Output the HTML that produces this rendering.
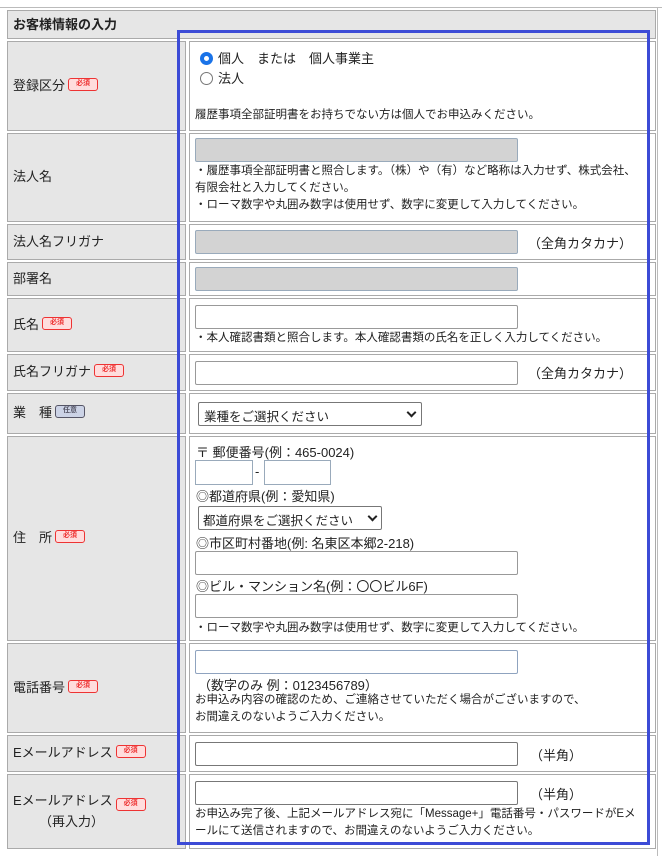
<!DOCTYPE html><html><head><meta charset="utf-8"><style>
*{box-sizing:border-box;margin:0;padding:0}
body{width:662px;height:856px;background:#fff;position:relative;overflow:hidden;font-family:"Liberation Sans","Noto Sans CJK JP",sans-serif;font-size:13px;color:#222}
.a{position:absolute}
.l{position:absolute;left:7px;width:179px;background:#e6e6e6;border:1px solid #aaa;padding-left:5px;padding-bottom:4px;display:flex;align-items:center;font-size:13px}
.v{position:absolute;left:189px;width:467px;background:#fff;border:1px solid #aaa}
.b{display:inline-block;width:30px;height:13px;border:1.5px solid #e33;border-radius:3px;background:#fdd;color:#e33;font-size:7px;line-height:10px;text-align:center;margin-left:3px;font-weight:bold}
.bn{border-color:#556;background:#ccd3e6;color:#556}
.i{position:absolute;left:195px;width:323px;height:24px;border:1px solid #777;border-radius:2px;background:#fff}
.g{background:#d3d3d3;border-color:#9ab}
.s{font-size:11.5px;line-height:17px}
.t{font-size:13px}
.ch{position:absolute;right:6px;top:6px;width:7px;height:7px;border-right:2px solid #222;border-bottom:2px solid #222;transform:rotate(45deg)}
</style></head><body>
<div class="a" style="left:0;top:7px;width:662px;height:1px;background:#bbb"></div>
<div class="a" style="left:657px;top:7px;width:1px;height:849px;background:#bbb"></div>
<div class="l" style="top:10px;height:29px;width:649px;font-weight:bold;padding-bottom:2px">お客様情報の入力</div>

<div class="l" style="top:41px;height:90px">登録区分<span class="b">必須</span></div>
<div class="v" style="top:41px;height:90px"></div>
<div class="a t" style="left:200px;top:48px"><span style="display:inline-block;width:13px;height:13px;border-radius:50%;border:4px solid #1a73e8;vertical-align:-2px;margin-right:5px"></span>個人　または　個人事業主</div>
<div class="a t" style="left:200px;top:68px"><span style="display:inline-block;width:13px;height:13px;border-radius:50%;border:1px solid #777;vertical-align:-2px;margin-right:5px"></span>法人</div>
<div class="a s" style="left:195px;top:107px">履歴事項全部証明書をお持ちでない方は個人でお申込みください。</div>

<div class="l" style="top:133px;height:89px">法人名</div>
<div class="v" style="top:133px;height:89px"></div>
<div class="i g" style="top:138px"></div>
<div class="a s" style="left:195px;top:163px;width:448px">・履歴事項全部証明書と照合します。（株）や（有）など略称は入力せず、株式会社、有限会社と入力してください。<br>・ローマ数字や丸囲み数字は使用せず、数字に変更して入力してください。</div>

<div class="l" style="top:224px;height:36px">法人名フリガナ</div>
<div class="v" style="top:224px;height:36px"></div>
<div class="i g" style="top:230px"></div>
<div class="a t" style="left:528px;top:233px">（全角カタカナ）</div>

<div class="l" style="top:262px;height:34px">部署名</div>
<div class="v" style="top:262px;height:34px"></div>
<div class="i g" style="top:267px"></div>

<div class="l" style="top:298px;height:54px">氏名<span class="b">必須</span></div>
<div class="v" style="top:298px;height:54px"></div>
<div class="i" style="top:305px;border-color:#999"></div>
<div class="a s" style="left:195px;top:330px">・本人確認書類と照合します。本人確認書類の氏名を正しく入力してください。</div>

<div class="l" style="top:354px;height:37px">氏名フリガナ<span class="b">必須</span></div>
<div class="v" style="top:354px;height:37px"></div>
<div class="i" style="top:361px;border-color:#999"></div>
<div class="a t" style="left:528px;top:363px">（全角カタカナ）</div>

<div class="l" style="top:393px;height:41px">業　種<span class="b bn">任意</span></div>
<div class="v" style="top:393px;height:41px"></div>
<div class="a" style="left:198px;top:402px;width:224px;height:24px;border:1px solid #777;border-radius:2px;font-size:12.5px;padding:3px 5px">業種をご選択ください<span class="ch"></span></div>

<div class="l" style="top:436px;height:205px">住　所<span class="b">必須</span></div>
<div class="v" style="top:436px;height:205px"></div>
<div class="a t" style="left:196px;top:442px">〒 郵便番号(例：465-0024)</div>
<div class="a" style="left:195px;top:460px;width:58px;height:25px;border:1px solid #9ab"></div>
<div class="a t" style="left:255px;top:464px">-</div>
<div class="a" style="left:264px;top:460px;width:67px;height:25px;border:1px solid #9ab"></div>
<div class="a t" style="left:196px;top:486px">◎都道府県(例：愛知県)</div>
<div class="a" style="left:198px;top:506px;width:184px;height:24px;border:1px solid #777;border-radius:2px;font-size:12.5px;padding:3px 4px">都道府県をご選択ください<span class="ch" style="right:5px"></span></div>
<div class="a t" style="left:196px;top:533px">◎市区町村番地(例: 名東区本郷2-218)</div>
<div class="i" style="top:551px;border-color:#999"></div>
<div class="a t" style="left:196px;top:576px">◎ビル・マンション名(例：〇〇ビル6F)</div>
<div class="i" style="top:594px;border-color:#999"></div>
<div class="a s" style="left:195px;top:620px">・ローマ数字や丸囲み数字は使用せず、数字に変更して入力してください。</div>

<div class="l" style="top:643px;height:90px">電話番号<span class="b">必須</span></div>
<div class="v" style="top:643px;height:90px"></div>
<div class="i" style="top:650px;border-color:#8fa3bf"></div>
<div class="a t" style="left:198px;top:675px">（数字のみ 例：0123456789）</div>
<div class="a s" style="left:195px;top:692px">お申込み内容の確認のため、ご連絡させていただく場合がございますので、<br>お間違えのないようご入力ください。</div>

<div class="l" style="top:735px;height:37px">Eメールアドレス<span class="b">必須</span></div>
<div class="v" style="top:735px;height:37px"></div>
<div class="i" style="top:742px"></div>
<div class="a t" style="left:530px;top:745px">（半角）</div>

<div class="l" style="top:774px;height:75px;flex-direction:column;align-items:flex-start;justify-content:center"><div>Eメールアドレス<span class="b">必須</span></div><div style="padding-left:26px">（再入力）</div></div>
<div class="v" style="top:774px;height:75px"></div>
<div class="i" style="top:781px"></div>
<div class="a t" style="left:530px;top:784px">（半角）</div>
<div class="a s" style="left:195px;top:806px;width:449px">お申込み完了後、上記メールアドレス宛に「Message+」電話番号・パスワードがEメールにて送信されますので、お間違えのないようご入力ください。</div>

<div class="a" style="left:177px;top:30px;width:473px;height:815px;border:3px solid #3c4bd6"></div>
</body></html>
